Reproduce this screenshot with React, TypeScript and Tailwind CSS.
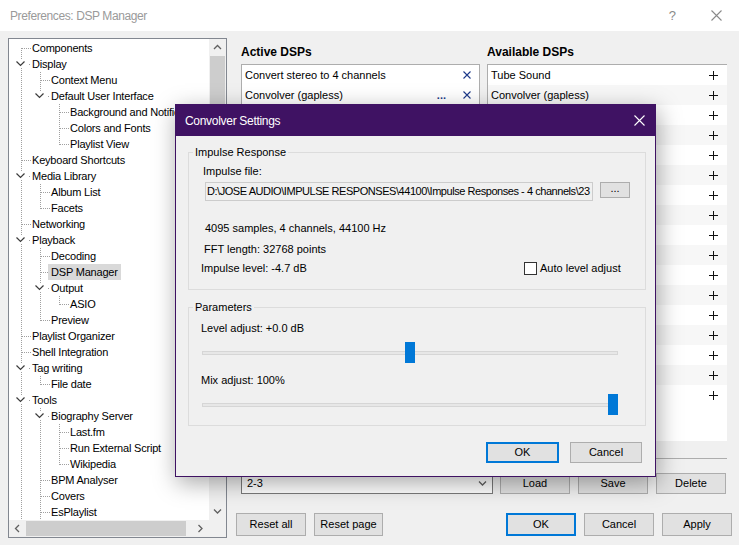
import clsx from 'clsx';

type Node = { label: string; children?: Node[]; more?: boolean; selected?: boolean };

const tree: Node[] = [
  { label: 'Components' },
  {
    label: 'Display',
    children: [
      { label: 'Context Menu' },
      {
        label: 'Default User Interface',
        children: [{ label: 'Background and Notifications' }, { label: 'Colors and Fonts' }, { label: 'Playlist View' }],
      },
    ],
  },
  { label: 'Keyboard Shortcuts' },
  { label: 'Media Library', children: [{ label: 'Album List' }, { label: 'Facets' }] },
  { label: 'Networking' },
  {
    label: 'Playback',
    children: [
      { label: 'Decoding' },
      { label: 'DSP Manager', selected: true },
      { label: 'Output', children: [{ label: 'ASIO' }] },
      { label: 'Preview' },
    ],
  },
  { label: 'Playlist Organizer' },
  { label: 'Shell Integration' },
  { label: 'Tag writing', children: [{ label: 'File date' }] },
  {
    label: 'Tools',
    more: true,
    children: [
      { label: 'Biography Server', children: [{ label: 'Last.fm' }, { label: 'Run External Script' }, { label: 'Wikipedia' }] },
      { label: 'BPM Analyser' },
      { label: 'Covers' },
      { label: 'EsPlaylist' },
    ],
  },
];

type Row = { node: Node; rails: boolean[]; last: boolean; first: boolean };

function flatten(nodes: Node[], rails: boolean[], more: boolean, out: Row[]) {
  nodes.forEach((node, i) => {
    const last = i === nodes.length - 1 && !more;
    out.push({ node, rails, last, first: rails.length === 0 && i === 0 });
    if (node.children) flatten(node.children, [...rails, !last], !!node.more, out);
  });
  return out;
}

const rows = flatten(tree, [], true, []);

const DOT = '#a0a0a0';

function Col({ kind, last, first }: { kind: 'rail' | 'none' | 'leaf' | 'exp'; last?: boolean; first?: boolean }) {
  return (
    <svg width="19" height="16" className="shrink-0">
      {kind === 'rail' && <line x1="9.5" y1="0" x2="9.5" y2="16" stroke={DOT} strokeDasharray="1 1" shapeRendering="crispEdges" />}
      {kind === 'leaf' && (
        <g shapeRendering="crispEdges">
          <line x1="9.5" y1={first ? 8 : 0} x2="9.5" y2={last ? 9 : 16} stroke={DOT} strokeDasharray="1 1" />
          <line x1="10" y1="8.5" x2="19" y2="8.5" stroke={DOT} strokeDasharray="1 1" />
        </g>
      )}
      {kind === 'exp' && (
        <g>
          <line x1="9.5" y1="0" x2="9.5" y2="3" stroke={DOT} strokeDasharray="1 1" shapeRendering="crispEdges" />
          {!last && <line x1="9.5" y1="12" x2="9.5" y2="16" stroke={DOT} strokeDasharray="1 1" shapeRendering="crispEdges" />}
          <path d="M4.5 5.5 L8.5 9.5 L12.5 5.5" fill="none" stroke="#3c3c3c" strokeWidth="1.2" />
          <rect x="17" y="8" width="1" height="1" fill={DOT} />
        </g>
      )}
    </svg>
  );
}

function Chevron({ dir, className }: { dir: 'up' | 'down' | 'left' | 'right'; className?: string }) {
  const d = {
    up: 'M1 5 L4.5 1.5 L8 5',
    down: 'M1 1.5 L4.5 5 L8 1.5',
    left: 'M5 1 L1.5 4.5 L5 8',
    right: 'M1.5 1 L5 4.5 L1.5 8',
  }[dir];
  const horiz = dir === 'up' || dir === 'down';
  return (
    <svg width={horiz ? 9 : 7} height={horiz ? 7 : 9} className={className}>
      <path d={d} fill="none" stroke="#606060" strokeWidth="1.3" />
    </svg>
  );
}

function Btn({ children, primary, className }: { children: React.ReactNode; primary?: boolean; className?: string }) {
  return (
    <button
      className={clsx(
        'flex shrink-0 items-center justify-center bg-[#e1e1e1] text-[11px] leading-none text-black',
        primary ? 'border-2 border-[#0078d7]' : 'border border-[#adadad]',
        className,
      )}
    >
      {children}
    </button>
  );
}

function Plus() {
  return (
    <svg width="9" height="9" shapeRendering="crispEdges">
      <line x1="4.5" y1="0" x2="4.5" y2="9" stroke="#111" />
      <line x1="0" y1="4.5" x2="9" y2="4.5" stroke="#111" />
    </svg>
  );
}

function Cross({ color, size = 8 }: { color: string; size?: number }) {
  return (
    <svg width={size} height={size}>
      <path d={`M0.5 0.5 L${size - 0.5} ${size - 0.5} M${size - 0.5} 0.5 L0.5 ${size - 0.5}`} stroke={color} strokeWidth="1.1" />
    </svg>
  );
}

const available = [
  'Tube Sound',
  'Convolver (gapless)',
  'Advanced Limiter',
  'Crossfader',
  'Downmix channels to mono',
  'Equalizer',
  'Hard -6dB limiter',
  'Move stereo to center channel',
  'Move stereo to rear channels',
  'Resampler (PPHS)',
  'Reverse stereo channels',
  'Skip Silence',
  'Stereo Convolver',
  'Surround Upmix',
  'Convert mono to stereo',
  'Channel mixer',
  'Dolby Headphone Wrapper',
];

function Slider({ value }: { value: number }) {
  return (
    <div className="relative ml-[13px] h-[21px] w-[416px]">
      <div className="absolute left-0 right-0 top-[9px] h-[4px] border border-[#d6d6d6] bg-[#e7e7e7]" />
      <div className="absolute top-0 h-[21px] w-[10px] bg-[#0078d7]" style={{ left: Math.round(value * 406) }} />
    </div>
  );
}

function ConvolverDialog() {
  return (
    <div className="absolute left-[175px] top-[104px] flex h-[373px] w-[481px] flex-col border border-[#3f1263] bg-[#f0f0f0] shadow-[2px_6px_22px_rgba(0,0,0,0.35)]">
      <div className="flex h-[31px] shrink-0 items-center justify-between bg-[#3f1263] pl-[9px] pr-[10px]">
        <span className="text-[12px] tracking-[-0.3px] text-white">Convolver Settings</span>
        <Cross color="#ffffff" size={11} />
      </div>

      <fieldset className="ml-[12px] mt-[9px] w-[458px] border border-[#dcdcdc] pb-[14px]">
        <legend className="ml-[4px] px-[2px] leading-[14px]">Impulse Response</legend>
        <div className="mt-[5px] pl-[14px] leading-[14px]">Impulse file:</div>
        <div className="mt-[4px] flex items-start">
          <div className="ml-[16px] h-[19px] w-[388px] overflow-hidden border border-[#cccccc] pl-[1px]">
            <div className="w-[386px] overflow-hidden whitespace-nowrap leading-[17px] tracking-[-0.45px]">
              D:\JOSE AUDIO\IMPULSE RESPONSES\44100\Impulse Responses - 4 channels\23
            </div>
          </div>
          <Btn className="ml-[7px] h-[16px] w-[30px] pb-[4px]">...</Btn>
        </div>
        <div className="mt-[20px] pl-[16px] leading-[14px]">4095 samples, 4 channels, 44100 Hz</div>
        <div className="mt-[7px] pl-[15px] leading-[14px]">FFT length: 32768 points</div>
        <div className="mt-[5px] flex items-center leading-[14px]">
          <span className="w-[335px] pl-[12px]">Impulse level: -4.7 dB</span>
          <span className="h-[13px] w-[13px] shrink-0 border border-[#333] bg-white" />
          <span className="ml-[3px]">Auto level adjust</span>
        </div>
      </fieldset>

      <fieldset className="ml-[12px] mt-[10px] w-[458px] border border-[#dcdcdc] pb-[10px]">
        <legend className="ml-[4px] px-[2px] leading-[14px]">Parameters</legend>
        <div className="mt-[7px] pl-[12px] leading-[14px]">Level adjust: +0.0 dB</div>
        <div className="mt-[7px]">
          <Slider value={0.5} />
        </div>
        <div className="mt-[10px] pl-[12px] leading-[14px]">Mix adjust: 100%</div>
        <div className="mt-[7px]">
          <Slider value={1} />
        </div>
      </fieldset>

      <div className="mt-[16px] flex justify-end gap-[11px] pr-[13px]">
        <Btn primary className="h-[21px] w-[73px]">OK</Btn>
        <Btn className="h-[21px] w-[72px]">Cancel</Btn>
      </div>
    </div>
  );
}

export default function App() {
  return (
    <div className="relative h-[545px] w-[739px] overflow-hidden bg-[#f0f0f0] font-['Liberation_Sans',Arial,sans-serif] text-[11px] text-black">
      <div className="flex h-[31px] items-center justify-between bg-white pl-[10px] pr-[17px]">
        <span className="text-[12px] tracking-[-0.4px] text-[#9a9a9a]">Preferences: DSP Manager</span>
        <div className="flex items-center gap-[35px]">
          <span className="text-[13px] text-[#8a8a8a]">?</span>
          <Cross color="#8a8a8a" size={11} />
        </div>
      </div>

      <div className="flex h-[514px]">
        <div className="w-[226px] shrink-0 pl-[8px] pt-[7px]">
          <div className="flex h-[500px] w-[219px] flex-col border border-[#828790] bg-white">
            <div className="flex min-h-0 flex-1">
              <div className="flex-1 overflow-hidden pl-[3px] pt-[1px] tracking-[-0.2px]">
                {rows.map((r, i) => (
                  <div key={i} className="flex h-[16px] items-center whitespace-nowrap">
                    {r.rails.map((on, j) => (
                      <Col key={j} kind={on ? 'rail' : 'none'} />
                    ))}
                    <Col kind={r.node.children ? 'exp' : 'leaf'} last={r.last} first={r.first} />
                    <span className={clsx('leading-[16px]', r.node.selected ? 'bg-[#d9d9d9] px-[3px]' : 'pl-[1px]', r.node.selected && '-ml-[2px]')}>
                      {r.node.label}
                    </span>
                  </div>
                ))}
              </div>
              <div className="flex w-[17px] shrink-0 flex-col items-center bg-[#f0f0f0]">
                <div className="flex h-[17px] items-center">
                  <Chevron dir="up" />
                </div>
                <div className="h-[180px] w-[15px] bg-[#cdcdcd]" />
                <div className="flex-1" />
                <div className="flex h-[17px] items-center">
                  <Chevron dir="down" />
                </div>
              </div>
            </div>
            <div className="flex h-[17px] shrink-0 bg-[#f0f0f0]">
              <div className="flex flex-1 items-center">
                <div className="flex w-[17px] justify-center">
                  <Chevron dir="left" />
                </div>
                <div className="h-[15px] w-[160px] bg-[#cdcdcd]" />
                <div className="flex-1" />
                <div className="flex w-[17px] justify-center">
                  <Chevron dir="right" />
                </div>
              </div>
              <div className="w-[17px]" />
            </div>
          </div>
        </div>

        <div className="flex flex-1 flex-col pl-[15px] pr-[12px] pt-[13px]">
          <div className="flex gap-[7px]">
            <div className="w-[239px]">
              <div className="h-[20px] text-[12px] font-bold leading-[16px]">Active DSPs</div>
              <div className="h-[395px] border border-[#adadad] bg-white">
                <div className="flex h-[20px] items-center bg-white pl-[3px] pr-[8px]">
                  <span className="flex-1">Convert stereo to 4 channels</span>
                  <Cross color="#1d3a8a" />
                </div>
                <div className="flex h-[20px] items-center bg-white pl-[3px] pr-[8px]">
                  <span className="flex-1">Convolver (gapless)</span>
                  <span className="mr-[17px] text-[11px] font-bold leading-none text-[#1d3a8a]">...</span>
                  <Cross color="#1d3a8a" />
                </div>
              </div>
            </div>
            <div className="w-[240px]">
              <div className="h-[20px] text-[12px] font-bold leading-[16px]">Available DSPs</div>
              <div className="h-[395px] border-b border-l border-t border-[#adadad]">
                <div className="h-[376px] bg-white">
                  {available.map((name, i) => (
                    <div key={name} className={clsx('flex h-[20px] items-center pl-[3px] pr-[9px]', i % 2 ? 'bg-[#f7f7f7]' : 'bg-white')}>
                      <span className="flex-1">{name}</span>
                      <Plus />
                    </div>
                  ))}
                </div>
              </div>
            </div>
          </div>

          <div className="mt-[14px] flex">
            <div className="flex h-[21px] w-[252px] items-center justify-between border border-[#7a7a7a] bg-white pl-[5px] pr-[5px]">
              <span>2-3</span>
              <Chevron dir="down" />
            </div>
            <Btn className="ml-[7px] h-[21px] w-[70px]">Load</Btn>
            <Btn className="ml-[8px] h-[21px] w-[70px]">Save</Btn>
            <Btn className="ml-[8px] h-[21px] w-[70px]">Delete</Btn>
          </div>

          <div className="-mx-[5px] mt-[19px] flex">
            <Btn className="h-[23px] w-[70px]">Reset all</Btn>
            <Btn className="ml-[8px] h-[23px] w-[69px]">Reset page</Btn>
            <Btn primary className="ml-auto h-[23px] w-[70px]">OK</Btn>
            <Btn className="ml-[8px] h-[23px] w-[70px]">Cancel</Btn>
            <Btn className="ml-[8px] h-[23px] w-[70px]">Apply</Btn>
          </div>
        </div>
      </div>

      <ConvolverDialog />
    </div>
  );
}
